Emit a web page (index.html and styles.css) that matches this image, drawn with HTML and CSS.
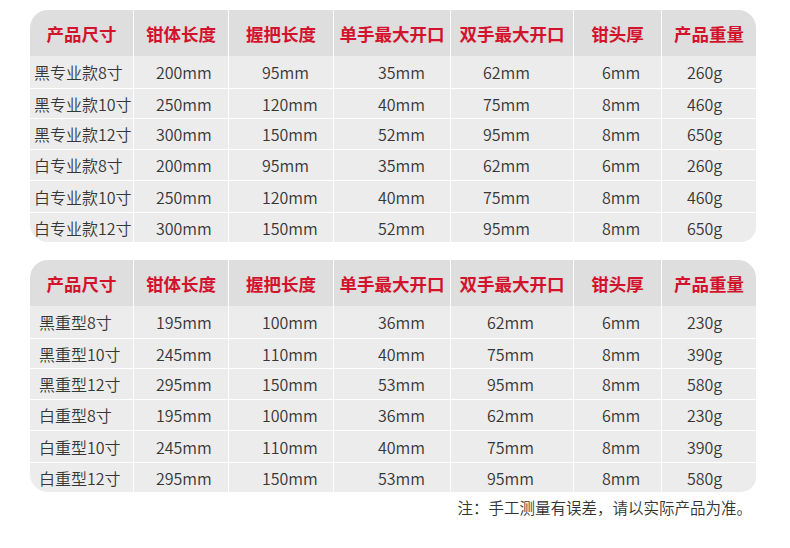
FILE: index.html
```html
<!DOCTYPE html>
<html lang="zh-CN">
<head>
<meta charset="utf-8">
<title>产品尺寸</title>
<link rel="stylesheet" href="styles.css">
</head>
<body>
<div class="page">
  <div class="table t1">
    <div class="row head">
      <div class="cell">产品尺寸</div><div class="cell">钳体长度</div><div class="cell">握把长度</div><div class="cell">单手最大开口</div><div class="cell">双手最大开口</div><div class="cell">钳头厚</div><div class="cell">产品重量</div>
    </div>
    <div class="row r1"><div class="cell">黑专业款8寸</div><div class="cell">200mm</div><div class="cell">95mm</div><div class="cell">35mm</div><div class="cell">62mm</div><div class="cell">6mm</div><div class="cell">260g</div></div>
    <div class="row r2"><div class="cell">黑专业款10寸</div><div class="cell">250mm</div><div class="cell">120mm</div><div class="cell">40mm</div><div class="cell">75mm</div><div class="cell">8mm</div><div class="cell">460g</div></div>
    <div class="row r3"><div class="cell">黑专业款12寸</div><div class="cell">300mm</div><div class="cell">150mm</div><div class="cell">52mm</div><div class="cell">95mm</div><div class="cell">8mm</div><div class="cell">650g</div></div>
    <div class="row r4"><div class="cell">白专业款8寸</div><div class="cell">200mm</div><div class="cell">95mm</div><div class="cell">35mm</div><div class="cell">62mm</div><div class="cell">6mm</div><div class="cell">260g</div></div>
    <div class="row r5"><div class="cell">白专业款10寸</div><div class="cell">250mm</div><div class="cell">120mm</div><div class="cell">40mm</div><div class="cell">75mm</div><div class="cell">8mm</div><div class="cell">460g</div></div>
    <div class="row r6"><div class="cell">白专业款12寸</div><div class="cell">300mm</div><div class="cell">150mm</div><div class="cell">52mm</div><div class="cell">95mm</div><div class="cell">8mm</div><div class="cell">650g</div></div>
  </div>

  <div class="table t2">
    <div class="row head">
      <div class="cell">产品尺寸</div><div class="cell">钳体长度</div><div class="cell">握把长度</div><div class="cell">单手最大开口</div><div class="cell">双手最大开口</div><div class="cell">钳头厚</div><div class="cell">产品重量</div>
    </div>
    <div class="row r1"><div class="cell">黑重型8寸</div><div class="cell">195mm</div><div class="cell">100mm</div><div class="cell">36mm</div><div class="cell">62mm</div><div class="cell">6mm</div><div class="cell">230g</div></div>
    <div class="row r2"><div class="cell">黑重型10寸</div><div class="cell">245mm</div><div class="cell">110mm</div><div class="cell">40mm</div><div class="cell">75mm</div><div class="cell">8mm</div><div class="cell">390g</div></div>
    <div class="row r3"><div class="cell">黑重型12寸</div><div class="cell">295mm</div><div class="cell">150mm</div><div class="cell">53mm</div><div class="cell">95mm</div><div class="cell">8mm</div><div class="cell">580g</div></div>
    <div class="row r4"><div class="cell">白重型8寸</div><div class="cell">195mm</div><div class="cell">100mm</div><div class="cell">36mm</div><div class="cell">62mm</div><div class="cell">6mm</div><div class="cell">230g</div></div>
    <div class="row r5"><div class="cell">白重型10寸</div><div class="cell">245mm</div><div class="cell">110mm</div><div class="cell">40mm</div><div class="cell">75mm</div><div class="cell">8mm</div><div class="cell">390g</div></div>
    <div class="row r6"><div class="cell">白重型12寸</div><div class="cell">295mm</div><div class="cell">150mm</div><div class="cell">53mm</div><div class="cell">95mm</div><div class="cell">8mm</div><div class="cell">580g</div></div>
  </div>

  <div class="note">注：手工测量有误差，请以实际产品为准。</div>
</div>
</body>
</html>
```

FILE: styles.css
```css
html, body {
  margin: 0;
  padding: 0;
  background: #ffffff;
}

body {
  width: 790px;
  height: 548px;
  overflow: hidden;
  font-family: "Noto Sans CJK SC", "Noto Sans", sans-serif;
}

.page {
  padding: 10px 0 0 30px;
  width: 726px;
}

.table {
  width: 726px;
  background: #ffffff;
  border-radius: 18px 18px 15px 18px;
  overflow: hidden;
}

.t2 {
  margin-top: 18px;
}

.row {
  display: grid;
  grid-template-columns: 103px 94px 104px 116px 122px 87px 94px;
  column-gap: 1px;
  box-sizing: border-box;
}

.row + .row + .row {
  border-top: 1px solid #ffffff;
}

.cell {
  display: flex;
  align-items: center;
  background: #ececec;
  color: #363636;
  font-size: 16px;
  font-weight: 350;
  white-space: nowrap;
}

.head .cell {
  background: #dedede;
  color: #d3122c;
  font-weight: 700;
  font-size: 17.5px;
  justify-content: center;
}

.head { height: 46px; }
.r1 { height: 32px; }
.r2 { height: 30px; }
.r3 { height: 31px; }
.r4 { height: 31px; }
.r5 { height: 32px; }
.r6 { height: 30px; }

.row:not(.head) .cell:nth-child(1) { padding-left: 4px; }
.row:not(.head) .cell:nth-child(2) { padding-left: 22px; }
.row:not(.head) .cell:nth-child(3) { padding-left: 33px; }
.row:not(.head) .cell:nth-child(4) { padding-left: 44px; }
.row:not(.head) .cell:nth-child(5) { padding-left: 32px; }
.row:not(.head) .cell:nth-child(6) { padding-left: 28px; }
.row:not(.head) .cell:nth-child(7) { padding-left: 25px; }

.t2 .row:not(.head) .cell:nth-child(1) { padding-left: 9px; }
.t2 .row:not(.head) .cell:nth-child(5) { padding-left: 36px; }

.note {
  margin-top: 4px;
  padding-right: 4px;
  text-align: right;
  font-size: 15.5px;
  font-weight: 350;
  line-height: 22px;
  color: #333333;
}
```
